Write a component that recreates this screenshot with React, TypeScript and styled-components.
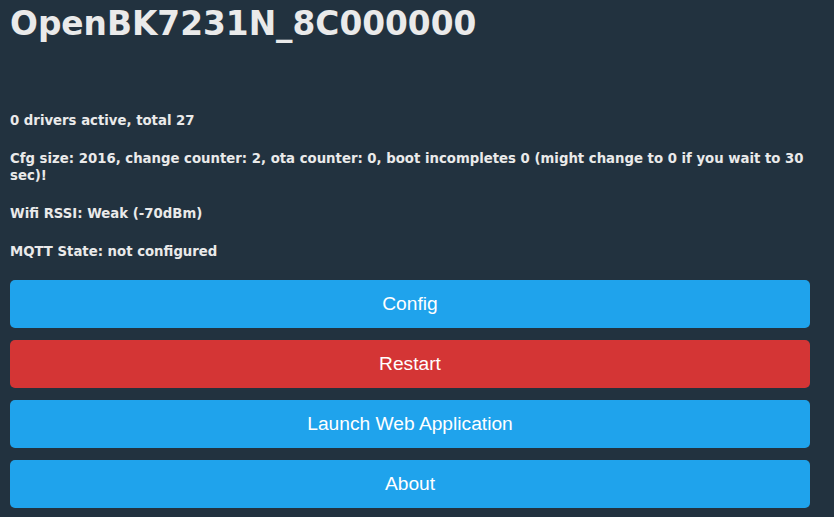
import React from "react";
import styled, { createGlobalStyle } from "styled-components";

const Global = createGlobalStyle`
  html, body { margin: 0; padding: 0; }
  body {
    background: #22323f;
    color: #eaeaea;
    font-family: "DejaVu Sans", Verdana, sans-serif;
  }
`;

const Page = styled.div`
  padding: 0 24px 0 10px;
  width: 800px;
`;

const Title = styled.h1`
  margin: 0;
  padding-top: 4px;
  font-size: 32.8px;
  font-weight: bold;
  line-height: 40px;
  white-space: nowrap;
`;

const Info = styled.div`
  padding-top: 68px;
  display: flex;
  flex-direction: column;
  gap: 21px;
  margin-bottom: 20px;
`;

const Line = styled.h5`
  margin: 0;
  font-size: 13.28px;
  font-weight: bold;
  line-height: 17px;
`;

const Buttons = styled.div`
  display: flex;
  flex-direction: column;
  gap: 12px;
`;

const Button = styled.button<{ $variant?: "red" | "blue" }>`
  width: 800px;
  height: 48px;
  border: 0;
  border-radius: 5px;
  background: ${(p) => (p.$variant === "red" ? "#d43535" : "#1fa3ec")};
  color: #ffffff;
  font-family: "Liberation Sans", Arial, sans-serif;
  font-size: 19.2px;
  cursor: pointer;
  padding: 0;
`;

export default function App() {
  return (
    <>
      <Global />
      <Page>
        <Title>OpenBK7231N_8C000000</Title>
        <Info>
          <Line>0 drivers active, total 27</Line>
          <Line>
            Cfg size: 2016, change counter: 2, ota counter: 0, boot incompletes 0 (might change to 0 if you wait to 30 sec)!
          </Line>
          <Line>Wifi RSSI: Weak (-70dBm)</Line>
          <Line>MQTT State: not configured</Line>
        </Info>
        <Buttons>
          <Button>Config</Button>
          <Button $variant="red">Restart</Button>
          <Button>Launch Web Application</Button>
          <Button>About</Button>
        </Buttons>
      </Page>
    </>
  );
}
